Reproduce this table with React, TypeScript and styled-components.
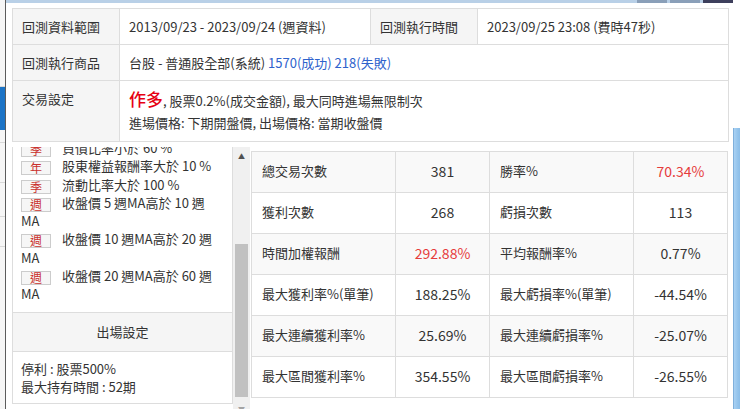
import React, { useLayoutEffect, useRef } from "react";
import styled, { createGlobalStyle } from "styled-components";

const GlobalStyle = createGlobalStyle`
  html, body { margin: 0; padding: 0; background: #fff; }
  body {
    font-family: "Noto Sans CJK TC", "Noto Sans", sans-serif;
    font-size: 13px;
    color: #333;
  }
  * { box-sizing: border-box; }
`;

const Frame = styled.div`
  display: flex;
  width: 740px;
  height: 409px;
  overflow: hidden;
  background: #fff;
`;

/* page behind the dialog, left side */
const PageGutter = styled.div`
  width: 5px;
  flex: none;
  display: flex;
  flex-direction: column;
  background: #f6f6f6;
`;

const GutterRow = styled.div<{ $h: number; $active?: boolean }>`
  height: ${(p) => p.$h}px;
  flex: none;
  background: ${(p) => (p.$active ? "#1c74c6" : "#f6f6f6")};
  border-bottom: 1px solid ${(p) => (p.$active ? "#1c74c6" : "#d9d9d9")};
`;

/* page behind the dialog, right side */
const SideGutter = styled.div`
  width: 7px;
  flex: none;
  display: flex;
  flex-direction: column;
`;

const SideTop = styled.div`
  height: 128px;
  flex: none;
  background: #fff;
`;

const SideBlue = styled.div`
  flex: 1;
  border-left: 1px solid #7fb0dc;
  background: linear-gradient(to right, #a9d1f3 0%, #94c4ec 60%, #8bbde8 100%);
`;

const Dialog = styled.div`
  flex: 1;
  min-width: 0;
  display: flex;
  flex-direction: column;
  border-left: 1px solid #5c5c5c;
`;

const TitleStrip = styled.div`
  height: 3px;
  flex: none;
  display: flex;
  justify-content: flex-end;
  gap: 3px;
  background: #b9d0e7;
`;

const WinButton = styled.div<{ $dark?: boolean }>`
  width: 30px;
  background: ${(p) => (p.$dark ? "#3d3f5c" : "#8a9fb8")};
`;

const Body = styled.div`
  flex: 1;
  min-height: 0;
  display: flex;
  flex-direction: column;
  padding: 5px 5px 0 6px;
`;

/* ---------- top info table ---------- */
const InfoTable = styled.table`
  width: 716px;
  flex: none;
  border-collapse: collapse;
  table-layout: fixed;
`;

const InfoLabel = styled.th`
  background: #f5f5f5;
  border: 1px solid #dddddd;
  font-weight: normal;
  text-align: left;
  vertical-align: top;
  padding: 8px 9px;
  color: #333;
`;

const InfoValue = styled.td`
  border: 1px solid #dddddd;
  vertical-align: top;
  padding: 8px 9px;
  color: #333;
`;

const CellLine = styled.div<{ $h: number }>`
  height: ${(p) => p.$h}px;
  line-height: ${(p) => p.$h}px;
  white-space: nowrap;
`;

const Blue = styled.span`
  color: #2e62cc;
`;

const Direction = styled.span`
  color: #e60012;
  font-size: 17px;
  font-weight: 500;
  line-height: 1;
`;

/* ---------- lower part ---------- */
const Lower = styled.div`
  flex: none;
  height: 270px;
  display: flex;
  gap: 1px;
  margin-top: 5px;
`;

const CondPanel = styled.div`
  width: 238px;
  flex: none;
  display: flex;
`;

const CondScroll = styled.div`
  position: relative;
  width: 221px;
  flex: none;
  overflow-y: scroll;
  scrollbar-width: none;
  &::-webkit-scrollbar { display: none; }
`;

const CondBox = styled.div`
  border: 1px solid #dddddd;
  margin-bottom: 24px;
`;

const SectionHeader = styled.div<{ $top?: boolean }>`
  height: 40px;
  display: flex;
  align-items: center;
  justify-content: center;
  background: #f5f5f5;
  border-top: ${(p) => (p.$top ? "none" : "1px solid #dddddd")};
  border-bottom: 1px solid #dddddd;
  color: #333;
`;

const CondList = styled.div`
  padding: 8px 8px 8.3px;
`;

const CondItem = styled.div`
  line-height: 18.3px;
`;

const Badge = styled.span`
  display: inline-block;
  width: 30px;
  height: 14px;
  margin-right: 11px;
  border: 1px solid #cccccc;
  background: #f6f6f6;
  color: #c9302c;
  font-size: 12px;
  line-height: 12px;
  text-align: center;
  vertical-align: -2px;
`;

const ExitBody = styled.div`
  padding: 8px 8px 7px;
  line-height: 18px;
`;

const ScrollTrack = styled.div`
  width: 17px;
  flex: none;
  display: flex;
  flex-direction: column;
  background: #f0f0f0;
`;

const ScrollArrow = styled.div<{ $dim?: boolean }>`
  height: 17px;
  flex: none;
  display: flex;
  align-items: center;
  justify-content: center;
  font-size: 7px;
  color: ${(p) => (p.$dim ? "#a3a3a3" : "#505050")};
`;

const ThumbRail = styled.div`
  flex: 1;
  display: flex;
  flex-direction: column;
  padding: 0 2px;
`;

const Thumb = styled.div<{ $top: number; $h: number }>`
  margin-top: ${(p) => p.$top}px;
  height: ${(p) => p.$h}px;
  background: #c1c1c1;
`;

const StatsTable = styled.table`
  width: 476px;
  flex: none;
  align-self: flex-start;
  margin-top: 4px;
  border-collapse: collapse;
  table-layout: fixed;
`;

const StatRow = styled.tr<{ $shade: boolean }>`
  background: ${(p) => (p.$shade ? "#f9f9f9" : "#ffffff")};
`;

const StatLabel = styled.td`
  height: 41px;
  border: 1px solid #dddddd;
  padding: 0 10px 3px;
  vertical-align: middle;
  color: #333;
  white-space: nowrap;
`;

const StatValue = styled.td<{ $red: boolean }>`
  height: 41px;
  border: 1px solid #dddddd;
  padding: 0 4px 3px;
  vertical-align: middle;
  text-align: center;
  font-size: 14px;
  color: ${(p) => (p.$red ? "#e63c3c" : "#333")};
`;

type Cond = { badge: string; text: string; wrap?: string };

const entryConds: Cond[] = [
  { badge: "季", text: "負債比率小於 60 %" },
  { badge: "年", text: "股東權益報酬率大於 10 %" },
  { badge: "季", text: "流動比率大於 100 %" },
  { badge: "週", text: "收盤價 5 週MA高於 10 週", wrap: "MA" },
  { badge: "週", text: "收盤價 10 週MA高於 20 週", wrap: "MA" },
  { badge: "週", text: "收盤價 20 週MA高於 60 週", wrap: "MA" },
];

type Stat = [string, string, boolean, string, string, boolean];

const stats: Stat[] = [
  ["總交易次數", "381", false, "勝率%", "70.34%", true],
  ["獲利次數", "268", false, "虧損次數", "113", false],
  ["時間加權報酬", "292.88%", true, "平均報酬率%", "0.77%", false],
  ["最大獲利率%(單筆)", "188.25%", false, "最大虧損率%(單筆)", "-44.54%", false],
  ["最大連續獲利率%", "25.69%", false, "最大連續虧損率%", "-25.07%", false],
  ["最大區間獲利率%", "354.55%", false, "最大區間虧損率%", "-26.55%", false],
];

const gutterRows = [
  { h: 87 },
  { h: 43, active: true },
  { h: 13 },
  { h: 40 },
  { h: 34 },
  { h: 30 },
  { h: 200 },
];

export default function App() {
  const scrollRef = useRef<HTMLDivElement>(null);
  const anchorRef = useRef<HTMLDivElement>(null);

  useLayoutEffect(() => {
    const el = scrollRef.current;
    const anchor = anchorRef.current;
    if (el && anchor) {
      el.scrollTop = anchor.offsetTop + 8;
    }
  }, []);

  return (
    <>
      <GlobalStyle />
      <Frame>
        <PageGutter>
          {gutterRows.map((r, i) => (
            <GutterRow key={i} $h={r.h} $active={r.active} />
          ))}
        </PageGutter>
        <Dialog>
          <TitleStrip>
            <WinButton />
            <WinButton />
            <WinButton $dark />
          </TitleStrip>
          <Body>
            <InfoTable>
              <colgroup>
                <col style={{ width: 107 }} />
                <col style={{ width: 251 }} />
                <col style={{ width: 107 }} />
                <col style={{ width: 251 }} />
              </colgroup>
              <tbody>
                <tr>
                  <InfoLabel><CellLine $h={19}>回測資料範圍</CellLine></InfoLabel>
                  <InfoValue><CellLine $h={19}>2013/09/23 - 2023/09/24 (週資料)</CellLine></InfoValue>
                  <InfoLabel><CellLine $h={19}>回測執行時間</CellLine></InfoLabel>
                  <InfoValue><CellLine $h={19}>2023/09/25 23:08 (費時47秒)</CellLine></InfoValue>
                </tr>
                <tr>
                  <InfoLabel><CellLine $h={19}>回測執行商品</CellLine></InfoLabel>
                  <InfoValue colSpan={3}>
                    <CellLine $h={19}>
                      台股 - 普通股全部(系統) <Blue>1570(成功) 218(失敗)</Blue>
                    </CellLine>
                  </InfoValue>
                </tr>
                <tr>
                  <InfoLabel><CellLine $h={19}>交易設定</CellLine></InfoLabel>
                  <InfoValue colSpan={3}>
                    <CellLine $h={24}>
                      <Direction>作多</Direction>, 股票0.2%(成交金額), 最大同時進場無限制次
                    </CellLine>
                    <CellLine $h={20}>進場價格: 下期開盤價, 出場價格: 當期收盤價</CellLine>
                  </InfoValue>
                </tr>
              </tbody>
            </InfoTable>

            <Lower>
              <CondPanel>
                <CondScroll ref={scrollRef}>
                  <CondBox>
                    <SectionHeader $top>進場設定</SectionHeader>
                    <CondList>
                      {entryConds.map((c, i) => (
                        <CondItem key={i} ref={i === 0 ? anchorRef : undefined}>
                          <Badge>{c.badge}</Badge>
                          {c.text}
                          {c.wrap && (
                            <>
                              <br />
                              {c.wrap}
                            </>
                          )}
                        </CondItem>
                      ))}
                    </CondList>
                    <SectionHeader>出場設定</SectionHeader>
                    <ExitBody>
                      <div>停利 : 股票500%</div>
                      <div>最大持有時間 : 52期</div>
                    </ExitBody>
                  </CondBox>
                </CondScroll>
                <ScrollTrack>
                  <ScrollArrow>▲</ScrollArrow>
                  <ThumbRail>
                    <Thumb $top={80} $h={153} />
                  </ThumbRail>
                  <ScrollArrow $dim>▼</ScrollArrow>
                </ScrollTrack>
              </CondPanel>

              <StatsTable>
                <colgroup>
                  <col style={{ width: 144 }} />
                  <col style={{ width: 94 }} />
                  <col style={{ width: 144 }} />
                  <col style={{ width: 94 }} />
                </colgroup>
                <tbody>
                  {stats.map((s, i) => (
                    <StatRow key={i} $shade={i % 2 === 0}>
                      <StatLabel>{s[0]}</StatLabel>
                      <StatValue $red={s[2]}>{s[1]}</StatValue>
                      <StatLabel>{s[3]}</StatLabel>
                      <StatValue $red={s[5]}>{s[4]}</StatValue>
                    </StatRow>
                  ))}
                </tbody>
              </StatsTable>
            </Lower>
          </Body>
        </Dialog>
        <SideGutter>
          <SideTop />
          <SideBlue />
        </SideGutter>
      </Frame>
    </>
  );
}
